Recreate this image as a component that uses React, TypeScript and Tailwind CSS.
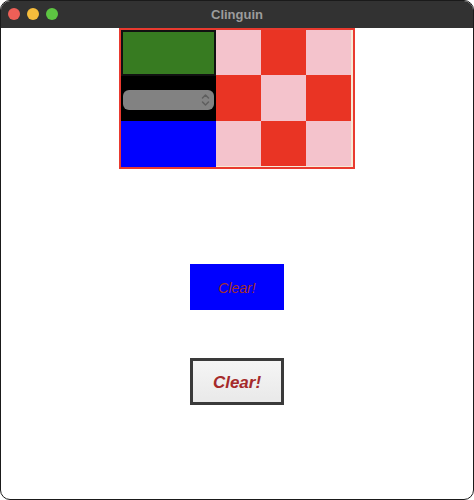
import React from 'react';

const PINK = 'bg-[#f4c3cc]';
const RED = 'bg-[#e93424]';

const App: React.FC = () => {
  const cells = [PINK, RED, PINK, RED, PINK, RED, PINK, RED, PINK];
  return (
    <div className="w-[474px] h-[500px] bg-white" style={{ fontFamily: '"Liberation Sans", Arial, sans-serif' }}>
      <div className="w-full h-full rounded-[10px] border border-[#1a1a1a] overflow-hidden flex flex-col bg-white">
        {/* Title bar */}
        <div className="relative h-[27px] bg-[#323232] flex items-center justify-center shrink-0">
          <div className="absolute left-[7px] top-[7px] flex gap-[7px]">
            <div className="w-[12px] h-[12px] rounded-full bg-[#ee5f57]" />
            <div className="w-[12px] h-[12px] rounded-full bg-[#f6bd3c]" />
            <div className="w-[12px] h-[12px] rounded-full bg-[#5dc542]" />
          </div>
          <span className="text-[13px] font-bold text-[#9c9c9c]">Clinguin</span>
        </div>

        {/* Content */}
        <div className="flex flex-col items-center">
          {/* Grid */}
          <div className="w-[236px] h-[141px] border-2 border-[#e93a2f] flex bg-[#f7ead6]">
            <div className="w-[95px] flex flex-col bg-black">
              <div className="h-[46px] border-2 border-[#111] bg-[#377b21]" />
              <div className="h-[45px] flex items-center px-[2px] pt-[2px]">
                <div className="w-full h-[20px] rounded-[6px] bg-[#828282] flex items-center justify-end pr-[4px]">
                  <svg width="9" height="14" viewBox="0 0 9 14" fill="none" stroke="#5e5e5e" strokeWidth="1.5" strokeLinecap="round" strokeLinejoin="round">
                    <path d="M1.5 5 L4.5 2 L7.5 5" />
                    <path d="M1.5 9 L4.5 12 L7.5 9" />
                  </svg>
                </div>
              </div>
              <div className="flex-1 bg-[#0000ff]" />
            </div>
            <div className="flex-1 grid grid-cols-3 grid-rows-3 pr-[2px] pb-[1px]">
              {cells.map((c, i) => (
                <div key={i} className={c} />
              ))}
            </div>
          </div>

          {/* Blue button */}
          <button className="mt-[95px] w-[94px] h-[46px] bg-[#0000ff] flex items-center justify-center pt-[3px]">
            <span className="text-[14px] italic text-[#a0322c]">Clear!</span>
          </button>

          {/* Grey button */}
          <button className="mt-[48px] w-[94px] h-[47px] border-[3px] border-[#3a3a3a] bg-gradient-to-b from-[#f5f5f5] to-[#e9e9e9] flex items-center justify-center pt-[3px]">
            <span className="text-[17px] italic font-bold text-[#a52a2a]">Clear!</span>
          </button>
        </div>
      </div>
    </div>
  );
};

export default App;
